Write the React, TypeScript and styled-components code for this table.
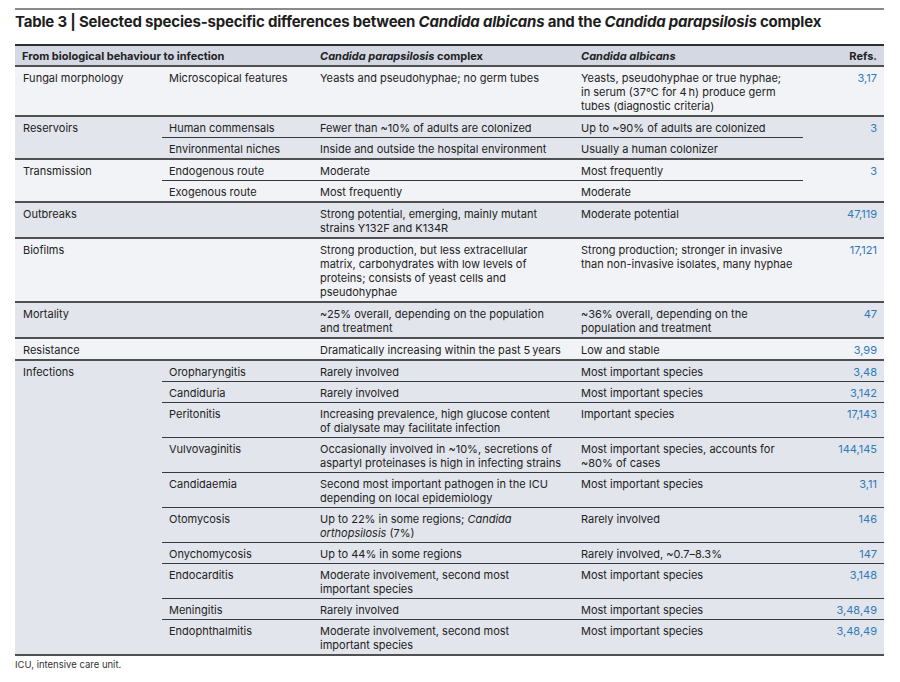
import React from 'react';
import styled, { createGlobalStyle } from 'styled-components';

const GlobalStyle = createGlobalStyle`
  body {
    margin: 0;
    background: #ffffff;
    font-family: Inter, "Liberation Sans", sans-serif;
    color: #222222;
  }
`;

const palette = {
  header: '#d4d8e2',
  light: '#f2f3f7',
  dark: '#e2e5ec',
  rule: '#505050',
  thin: '#3a3a3a',
  link: '#2f7ab8',
};

const COLUMNS = '147px 151px 261px 229px 81px';

const Page = styled.div`
  padding: 8px 16px 0 15px;
  width: 869px;
`;

const TopRule = styled.div`
  height: 2px;
  background: #8a8a8a;
`;

const Title = styled.h1`
  margin: 2px 0 12px;
  font-size: 15px;
  line-height: 20px;
  font-weight: 700;
  letter-spacing: -0.2px;
  color: #1e1e1e;
`;

const Table = styled.div`
  border-top: 2px solid #2e2e2e;
  border-bottom: 2px solid ${palette.rule};
  font-size: 11px;
  line-height: 14px;
`;

const HeaderRow = styled.div`
  display: grid;
  grid-template-columns: ${COLUMNS};
  background: ${palette.header};
  font-weight: 700;
  border-bottom: 2px solid ${palette.rule};
`;

const HeadCell = styled.div<{ $span?: number; $right?: boolean }>`
  grid-column: span ${(p) => p.$span ?? 1};
  padding: 3px 7px 2px;
  text-align: ${(p) => (p.$right ? 'right' : 'left')};
`;

const Group = styled.div<{ $shade: 'light' | 'dark'; $last?: boolean }>`
  display: grid;
  grid-template-columns: ${COLUMNS};
  background: ${(p) => palette[p.$shade]};
  border-bottom: ${(p) => (p.$last ? 'none' : `2px solid ${palette.rule}`)};
`;

const GroupLabel = styled.div<{ $rows: number; $span?: number }>`
  grid-row: 1 / span ${(p) => p.$rows};
  grid-column: span ${(p) => p.$span ?? 1};
  padding: 4px 7px 2px 8px;
`;

const Cell = styled.div<{ $divided?: boolean; $padRight?: number }>`
  padding: 4px ${(p) => p.$padRight ?? 7}px 2px 7px;
  border-top: ${(p) => (p.$divided ? `1px solid ${palette.thin}` : 'none')};
`;

const Refs = styled(Cell)<{ $rows?: number }>`
  grid-row: span ${(p) => p.$rows ?? 1};
  text-align: right;
  color: ${palette.link};
`;

const NoWrap = styled.span`
  white-space: nowrap;
`;

const Note = styled.p`
  margin: 2px 0 0 0;
  font-size: 9.5px;
  line-height: 14px;
  color: #333;
`;

type Sub = {
  name?: string;
  para: React.ReactNode;
  albi: React.ReactNode;
  refs?: string;
};

type GroupData = {
  label: string;
  sharedRefs?: string;
  subs: Sub[];
};

const groups: GroupData[] = [
  {
    label: 'Fungal morphology',
    subs: [
      {
        name: 'Microscopical features',
        para: 'Yeasts and pseudohyphae; no germ tubes',
        albi: (
          <>
            Yeasts, pseudohyphae or true hyphae;
            <br />
            {'in serum (37\u00b0C for 4\u2009h) produce germ tubes (diagnostic criteria)'}
          </>
        ),
        refs: '3,17',
      },
    ],
  },
  {
    label: 'Reservoirs',
    sharedRefs: '3',
    subs: [
      { name: 'Human commensals', para: 'Fewer than ~10% of adults are colonized', albi: 'Up to ~90% of adults are colonized' },
      { name: 'Environmental niches', para: 'Inside and outside the hospital environment', albi: 'Usually a human colonizer' },
    ],
  },
  {
    label: 'Transmission',
    sharedRefs: '3',
    subs: [
      { name: 'Endogenous route', para: 'Moderate', albi: 'Most frequently' },
      { name: 'Exogenous route', para: 'Most frequently', albi: 'Moderate' },
    ],
  },
  {
    label: 'Outbreaks',
    subs: [
      {
        para: 'Strong potential, emerging, mainly mutant strains Y132F and K134R',
        albi: 'Moderate potential',
        refs: '47,119',
      },
    ],
  },
  {
    label: 'Biofilms',
    subs: [
      {
        para: 'Strong production, but less extracellular matrix, carbohydrates with low levels of proteins; consists of yeast cells and pseudohyphae',
        albi: 'Strong production; stronger in invasive than non-invasive isolates, many hyphae',
        refs: '17,121',
      },
    ],
  },
  {
    label: 'Mortality',
    subs: [
      {
        para: '~25% overall, depending on the population and treatment',
        albi: '~36% overall, depending on the population and treatment',
        refs: '47',
      },
    ],
  },
  {
    label: 'Resistance',
    subs: [
      {
        para: <NoWrap>{'Dramatically increasing within the past 5\u2009years'}</NoWrap>,
        albi: 'Low and stable',
        refs: '3,99',
      },
    ],
  },
  {
    label: 'Infections',
    subs: [
      { name: 'Oropharyngitis', para: 'Rarely involved', albi: 'Most important species', refs: '3,48' },
      { name: 'Candiduria', para: 'Rarely involved', albi: 'Most important species', refs: '3,142' },
      {
        name: 'Peritonitis',
        para: 'Increasing prevalence, high glucose content of dialysate may facilitate infection',
        albi: 'Important species',
        refs: '17,143',
      },
      {
        name: 'Vulvovaginitis',
        para: 'Occasionally involved in ~10%, secretions of aspartyl proteinases is high in infecting strains',
        albi: 'Most important species, accounts for ~80% of cases',
        refs: '144,145',
      },
      {
        name: 'Candidaemia',
        para: 'Second most important pathogen in the ICU depending on local epidemiology',
        albi: 'Most important species',
        refs: '3,11',
      },
      {
        name: 'Otomycosis',
        para: (
          <>
            Up to 22% in some regions; <i>Candida</i>
            <br />
            <i>orthopsilosis</i> (7%)
          </>
        ),
        albi: 'Rarely involved',
        refs: '146',
      },
      { name: 'Onychomycosis', para: 'Up to 44% in some regions', albi: 'Rarely involved, ~0.7\u20138.3%', refs: '147' },
      {
        name: 'Endocarditis',
        para: 'Moderate involvement, second most important species',
        albi: 'Most important species',
        refs: '3,148',
      },
      { name: 'Meningitis', para: 'Rarely involved', albi: 'Most important species', refs: '3,48,49' },
      {
        name: 'Endophthalmitis',
        para: 'Moderate involvement, second most important species',
        albi: 'Most important species',
        refs: '3,48,49',
      },
    ],
  },
];

const SpeciesGroup = ({ group, index, last }: { group: GroupData; index: number; last: boolean }) => {
  const hasNames = group.subs.some((s) => s.name);
  const rows = group.subs.length;
  return (
    <Group $shade={index % 2 === 0 ? 'light' : 'dark'} $last={last}>
      <GroupLabel $rows={rows} $span={hasNames ? 1 : 2}>
        {group.label}
      </GroupLabel>
      {group.subs.map((sub, i) => (
        <React.Fragment key={i}>
          {hasNames && <Cell $divided={i > 0}>{sub.name}</Cell>}
          <Cell $divided={i > 0} $padRight={13}>
            {sub.para}
          </Cell>
          <Cell $divided={i > 0} $padRight={7}>
            {sub.albi}
          </Cell>
          {group.sharedRefs ? (
            i === 0 && <Refs $rows={rows}>{group.sharedRefs}</Refs>
          ) : (
            <Refs $divided={i > 0}>{sub.refs}</Refs>
          )}
        </React.Fragment>
      ))}
    </Group>
  );
};

const App = () => (
  <>
    <GlobalStyle />
    <Page>
      <TopRule />
      <Title>
        Table 3 | Selected species-specific differences between <i>Candida albicans</i> and the{' '}
        <i>Candida parapsilosis</i> complex
      </Title>
      <Table>
        <HeaderRow>
          <HeadCell $span={2}>From biological behaviour to infection</HeadCell>
          <HeadCell>
            <i>Candida parapsilosis</i> complex
          </HeadCell>
          <HeadCell>
            <i>Candida albicans</i>
          </HeadCell>
          <HeadCell $right>Refs.</HeadCell>
        </HeaderRow>
        {groups.map((g, i) => (
          <SpeciesGroup key={g.label} group={g} index={i} last={i === groups.length - 1} />
        ))}
      </Table>
      <Note>ICU, intensive care unit.</Note>
    </Page>
  </>
);

export default App;
